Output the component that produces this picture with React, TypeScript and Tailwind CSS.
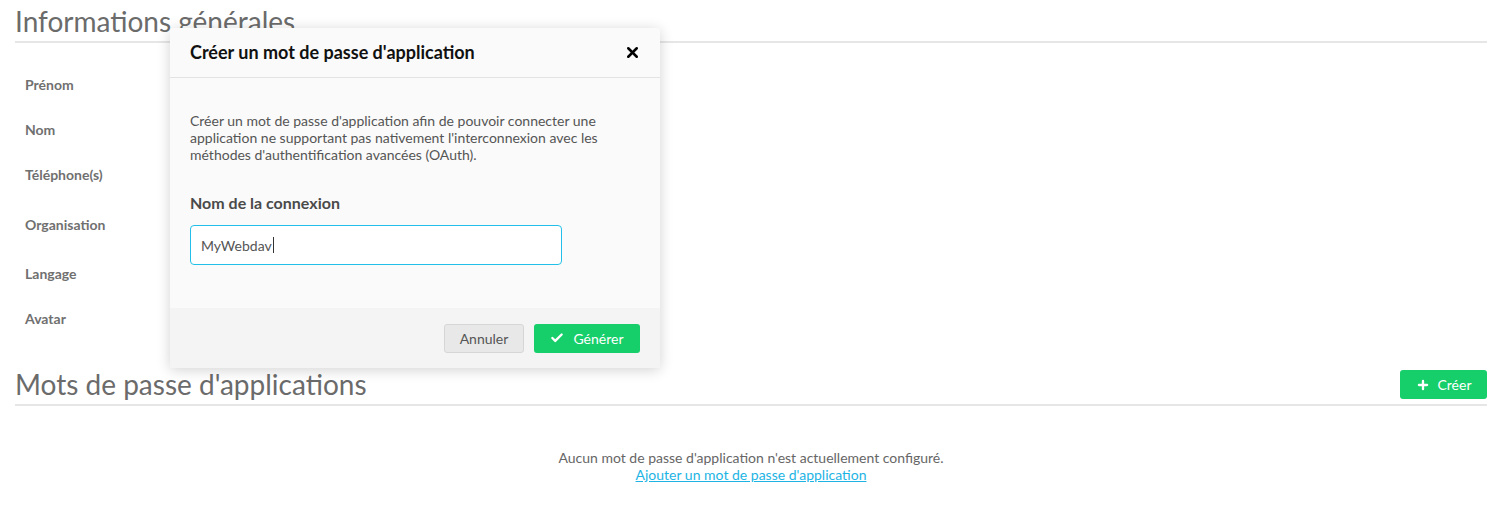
import { Check, Plus, X } from "lucide-react";

const FIELDS: { label: string; h: string }[] = [
  { label: "Prénom", h: "h-[45px]" },
  { label: "Nom", h: "h-[45px]" },
  { label: "Téléphone(s)", h: "h-[45px]" },
  { label: "Organisation", h: "h-[54px]" },
  { label: "Langage", h: "h-[44px]" },
  { label: "Avatar", h: "h-[46px]" },
];

function SectionTitle({ children, action }: { children: React.ReactNode; action?: React.ReactNode }) {
  return (
    <div className="flex items-start justify-between border-b-2 border-[#e6e6e6] pb-[2px]">
      <h2 className="text-[28px] leading-[36px] font-normal text-[#6b6b6b]">{children}</h2>
      {action}
    </div>
  );
}

function AppPasswordModal() {
  return (
    <div className="absolute left-[170px] top-[28px] flex h-[340px] w-[490px] flex-col overflow-hidden rounded-[3px] bg-[#fafafa] shadow-[0_2px_14px_rgba(0,0,0,0.18)]">
      <div className="flex h-[50px] shrink-0 items-center justify-between border-b border-[#e3e3e3] pl-[20px] pr-[19px]">
        <h3 className="text-[18px] font-bold text-[#111]">Créer un mot de passe d'application</h3>
        <X size={17} strokeWidth={3.6} className="text-black" />
      </div>
      <div className="flex-1 px-[20px] pt-[34px]">
        <p className="w-[450px] text-[14px] leading-[17px] text-[#555]">
          Créer un mot de passe d'application afin de pouvoir connecter une application ne supportant pas
          nativement l'interconnexion avec les méthodes d'authentification avancées (OAuth).
        </p>
        <label className="mt-[30px] block text-[16px] leading-[19px] font-bold text-[#4a4a4a]">Nom de la connexion</label>
        <div className="mt-[13px] flex h-[40px] w-[372px] items-center rounded-[4px] border border-[#22c0e8] bg-white pl-[10px] text-[14px] text-[#555]">
          MyWebdav
          <span className="ml-[1px] h-[16px] w-px bg-[#333]" />
        </div>
      </div>
      <div className="flex h-[60px] shrink-0 items-center justify-end gap-[10px] bg-[#f4f4f4] pr-[20px]">
        <button className="h-[29px] w-[80px] rounded-[3px] border border-[#d6d6d6] bg-[#e8e8e8] text-[14px] text-[#555]">
          Annuler
        </button>
        <button className="flex h-[29px] w-[106px] items-center justify-center gap-[9px] rounded-[3px] bg-[#16ce6a] text-[14px] text-white">
          <Check size={14} strokeWidth={4} />
          Générer
        </button>
      </div>
    </div>
  );
}

export default function App() {
  return (
    <div className="relative min-h-[512px] bg-white px-[15px] pt-[3px] font-['Lato','Noto_Sans',sans-serif] text-[#666]">
      <SectionTitle>Informations générales</SectionTitle>
      <div className="flex flex-col pl-[10px] pt-[19px]">
        {FIELDS.map((f) => (
          <div key={f.label} className={`flex items-center ${f.h}`}>
            <span className="text-[14px] font-bold text-[#707070]">{f.label}</span>
          </div>
        ))}
      </div>

      <div className="mt-[25px]">
        <SectionTitle
          action={
            <button className="mt-[4px] flex h-[29px] w-[87px] items-center justify-center gap-[8px] rounded-[3px] bg-[#16ce6a] text-[14px] text-white">
              <Plus size={14} strokeWidth={4} />
              Créer
            </button>
          }
        >
          Mots de passe d'applications
        </SectionTitle>
      </div>

      <div className="mt-[43px] flex flex-col items-center text-[14px] leading-[17px]">
        <p className="text-[#666]">Aucun mot de passe d'application n'est actuellement configuré.</p>
        <a href="#" className="text-[#1db4e4] underline">Ajouter un mot de passe d'application</a>
      </div>

      <AppPasswordModal />
    </div>
  );
}
